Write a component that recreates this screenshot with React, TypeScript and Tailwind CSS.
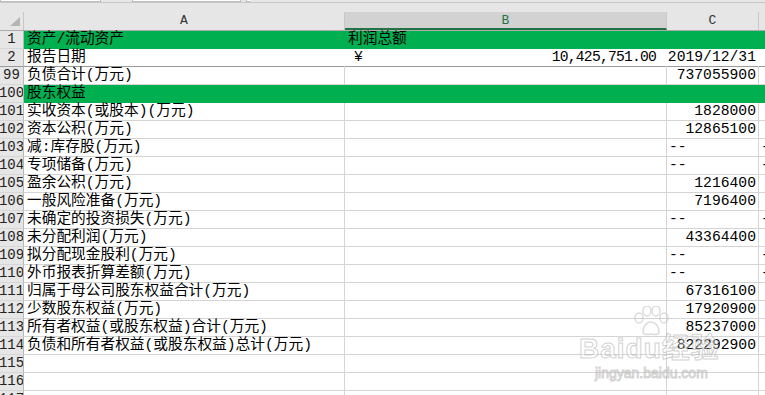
import React from "react";

type Row = {
  n: string;
  a?: string;
  b?: string;
  c?: string;
  green?: boolean;
  dash?: boolean;
  money?: boolean;
  noLines?: boolean;
  darkBottom?: boolean;
};

const rows: Row[] = [
  { n: "1", a: "资产/流动资产", b: "利润总额", green: true },
  { n: "2", a: "报告日期", money: true, c: "2019/12/31", noLines: true, darkBottom: true },
  { n: "99", a: "负债合计(万元)", c: "737055900" },
  { n: "100", a: "股东权益", green: true },
  { n: "101", a: "实收资本(或股本)(万元)", c: "1828000" },
  { n: "102", a: "资本公积(万元)", c: "12865100" },
  { n: "103", a: "减:库存股(万元)", dash: true },
  { n: "104", a: "专项储备(万元)", dash: true },
  { n: "105", a: "盈余公积(万元)", c: "1216400" },
  { n: "106", a: "一般风险准备(万元)", c: "7196400" },
  { n: "107", a: "未确定的投资损失(万元)", dash: true },
  { n: "108", a: "未分配利润(万元)", c: "43364400" },
  { n: "109", a: "拟分配现金股利(万元)", dash: true },
  { n: "110", a: "外币报表折算差额(万元)", dash: true },
  { n: "111", a: "归属于母公司股东权益合计(万元)", c: "67316100" },
  { n: "112", a: "少数股东权益(万元)", c: "17920900" },
  { n: "113", a: "所有者权益(或股东权益)合计(万元)", c: "85237000" },
  { n: "114", a: "负债和所有者权益(或股东权益)总计(万元)", c: "822292900" },
  { n: "115" },
  { n: "116" },
  { n: "117" },
];

const font = "font-['Liberation_Mono','Noto_Sans_CJK_SC',monospace]";

function SheetRow({ row }: { row: Row }) {
  const bottom = row.green
    ? "border-b-[#00b050]"
    : row.darkBottom
      ? "border-b-[#9a9a9a]"
      : "border-b-[#d4d4d4]";
  const side = row.green
    ? "border-r-[#00b050]"
    : row.noLines
      ? "border-r-white"
      : "border-r-[#d4d4d4]";
  const bg = row.green ? "bg-[#00b050]" : "bg-white";

  return (
    <div className="flex h-[18px]">
      <div
        className={`w-[24px] shrink-0 flex items-center justify-center overflow-hidden border-r border-r-[#b8b8b8] border-b bg-[#e6e6e6] text-[14px] leading-[17px] text-[#222] ${
          row.darkBottom ? "border-b-[#9a9a9a]" : "border-b-[#d6d6d6]"
        }`}
      >
        <span className="whitespace-nowrap">{row.n}</span>
      </div>
      <div
        className={`w-[321px] shrink-0 border-r border-b ${side} ${bottom} ${bg} pl-[3px] leading-[17px] whitespace-nowrap overflow-visible relative z-10`}
      >
        {row.a}
      </div>
      <div
        className={`w-[322px] shrink-0 border-r border-b ${side} ${bottom} ${bg} leading-[17px] whitespace-nowrap flex`}
      >
        {row.b && <span className="pl-[3px]">{row.b}</span>}
        {row.money && (
          <>
            <span className="pl-[9px]">¥</span>
            <span className="ml-auto pr-[10px] tracking-[-0.8px]">10,425,751.00</span>
          </>
        )}
      </div>
      <div
        className={`w-[92px] shrink-0 border-r border-b ${side} ${bottom} ${bg} leading-[17px] whitespace-nowrap flex ${
          row.dash ? "justify-start pl-[2px]" : "justify-end pr-[2px]"
        }`}
      >
        {row.dash ? "--" : row.c}
      </div>
      <div className={`flex-1 border-b ${bottom} ${bg} leading-[17px] whitespace-nowrap pl-[2px]`}>
        {row.dash ? "--" : ""}
      </div>
    </div>
  );
}

export default function App() {
  return (
    <div className={`relative w-[765px] h-[395px] overflow-hidden bg-white text-black text-[14.7px] ${font}`}>
      {/* formula bar remnants */}
      <div className="flex h-[3px] bg-[#e6e6e6] border-b border-b-[#c8c8c8]">
        <div className="w-[101px] bg-white border-x border-b border-[#bdbdbd]" />
        <div className="w-[31px]" />
        <div className="w-[109px] bg-white border-x border-b border-[#bdbdbd]" />
        <div className="w-[5px]" />
        <div className="w-[4px] bg-white border-l border-b border-[#bdbdbd]" />
      </div>
      <div className="h-[9px] bg-[#e6e6e6]" />

      {/* column headers */}
      <div className="flex h-[19px] bg-[#e6e6e6] border-b border-b-[#ababab] text-[13px] leading-[18px]">
        <div className="w-[24px] shrink-0 relative border-r border-r-[#c8c8c8]">
          <div className="absolute left-[10px] top-[5px] w-0 h-0 border-l-[10px] border-l-transparent border-b-[9px] border-b-[#b4b4b4]" />
        </div>
        <div className="w-[321px] shrink-0 text-center text-[#333] border-r border-r-[#c8c8c8]">A</div>
        <div className="w-[322px] shrink-0 text-center bg-[#d2d2d2] text-[#217346] border-b-2 border-b-[#217346] border-r border-r-[#c8c8c8]">
          B
        </div>
        <div className="w-[92px] shrink-0 text-center text-[#333] border-r border-r-[#c8c8c8]">C</div>
        <div className="flex-1" />
      </div>

      {rows.map((row) => (
        <SheetRow key={row.n} row={row} />
      ))}

      {/* watermark */}
      <div className="absolute left-[583px] top-[306px] z-20 pointer-events-none flex flex-col items-center text-white/40 [-webkit-text-stroke:1px_rgba(170,170,170,0.55)] font-['Liberation_Sans','Noto_Sans_CJK_SC',sans-serif]">
        <svg width="44" height="30" viewBox="0 0 44 30" className="opacity-60">
          <g fill="none" stroke="#c4c4c4" strokeWidth="1.5">
            <ellipse cx="10" cy="12" rx="4" ry="5" />
            <ellipse cx="18" cy="5" rx="4" ry="5" />
            <ellipse cx="27" cy="5" rx="4" ry="5" />
            <ellipse cx="35" cy="12" rx="4" ry="5" />
            <path d="M14 26c0-6 4-10 8-10s8 4 8 10c0 3-4 3-8 2-4 1-8 1-8-2z" />
          </g>
        </svg>
        <div className="text-[28px] leading-[26px] font-bold tracking-[1px] -ml-[4px]">Baidu经验</div>
        <div className="text-[14px] leading-[18px] mt-[2px]">jingyan.baidu.com</div>
      </div>
    </div>
  );
}
